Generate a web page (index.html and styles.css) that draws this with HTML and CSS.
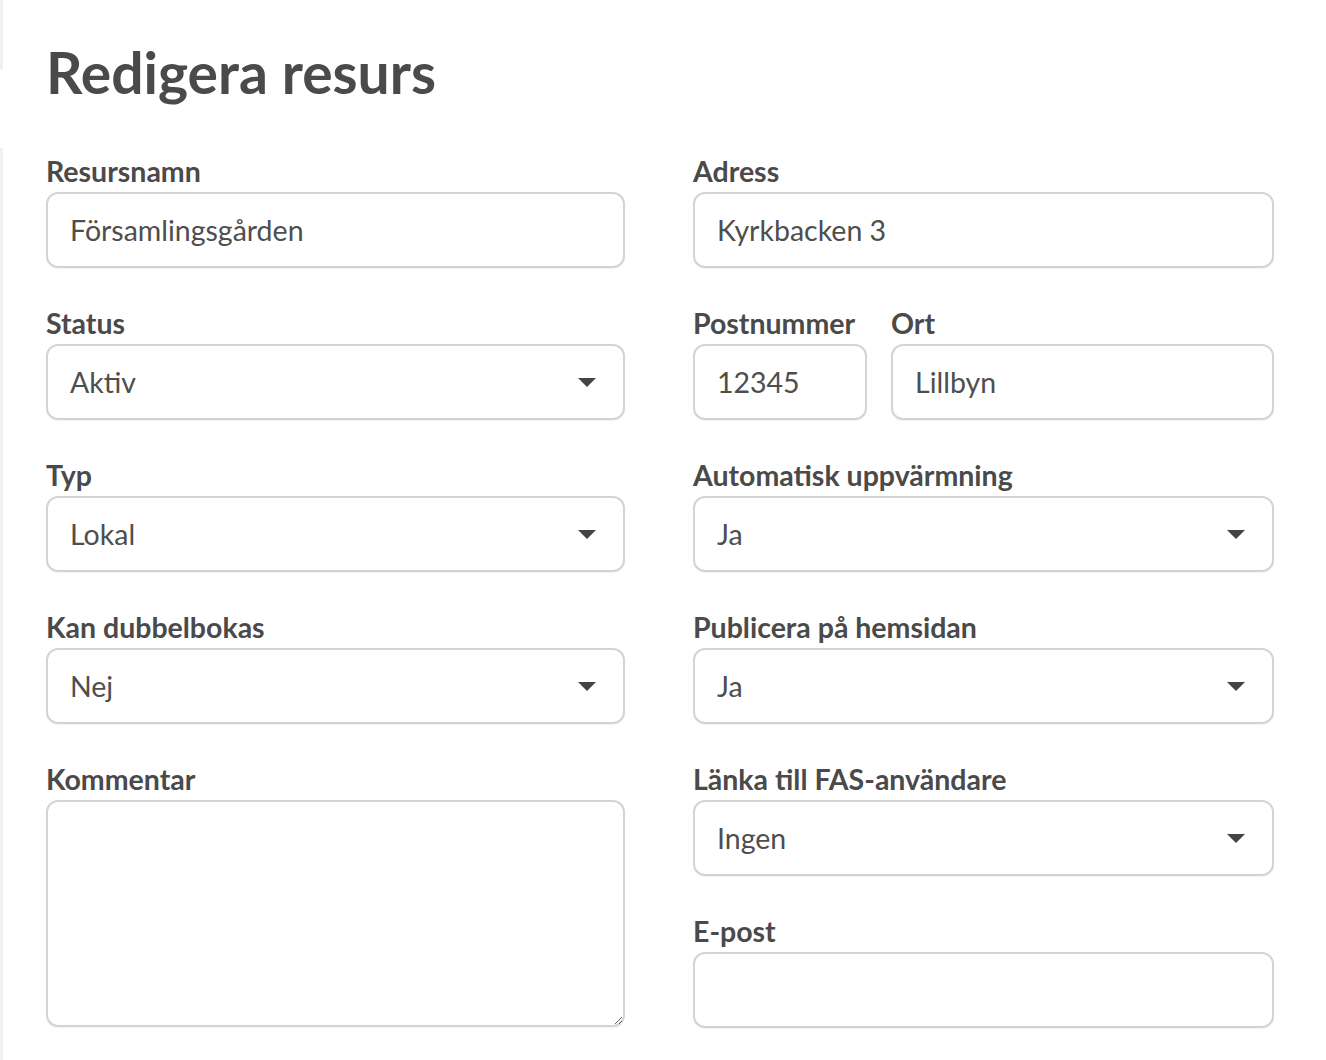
FILE: index.html
```html
<!DOCTYPE html>
<html lang="sv">
<head>
  <meta charset="UTF-8" />
  <meta name="viewport" content="width=device-width, initial-scale=1.0"/>
  <title>Redigera resurs</title>
  <link rel="stylesheet" href="styles.css">
</head>
<body>

  <div class="side-edge top"></div>
  <div class="side-edge bottom"></div>

  <main class="page">
    <h1>Redigera resurs</h1>

    <form class="resource-form">
      <div class="column">
        <div class="field">
          <label for="name">Resursnamn</label>
          <input type="text" id="name" value="Församlingsgården" />
        </div>

        <div class="field">
          <label for="status">Status</label>
          <div class="select-box">
            <select id="status">
              <option>Aktiv</option>
              <option>Inaktiv</option>
            </select>
          </div>
        </div>

        <div class="field">
          <label for="type">Typ</label>
          <div class="select-box">
            <select id="type">
              <option>Lokal</option>
            </select>
          </div>
        </div>

        <div class="field">
          <label for="double">Kan dubbelbokas</label>
          <div class="select-box">
            <select id="double">
              <option>Nej</option>
              <option>Ja</option>
            </select>
          </div>
        </div>

        <div class="field">
          <label for="comment">Kommentar</label>
          <textarea id="comment"></textarea>
        </div>
      </div>

      <div class="column">
        <div class="field">
          <label for="address">Adress</label>
          <input type="text" id="address" value="Kyrkbacken 3" />
        </div>

        <div class="field split">
          <div class="zip">
            <label for="zip">Postnummer</label>
            <input type="text" id="zip" value="12345" />
          </div>
          <div class="city">
            <label for="city">Ort</label>
            <input type="text" id="city" value="Lillbyn" />
          </div>
        </div>

        <div class="field">
          <label for="heating">Automatisk uppvärmning</label>
          <div class="select-box">
            <select id="heating">
              <option>Ja</option>
              <option>Nej</option>
            </select>
          </div>
        </div>

        <div class="field">
          <label for="publish">Publicera på hemsidan</label>
          <div class="select-box">
            <select id="publish">
              <option>Ja</option>
              <option>Nej</option>
            </select>
          </div>
        </div>

        <div class="field">
          <label for="user">Länka till FAS-användare</label>
          <div class="select-box">
            <select id="user">
              <option>Ingen</option>
            </select>
          </div>
        </div>

        <div class="field">
          <label for="email">E-post</label>
          <input type="email" id="email" />
        </div>
      </div>
    </form>
  </main>

</body>
</html>
```

FILE: styles.css
```css
body {
  font-family: 'Lato', 'Open Sans', sans-serif;
  margin: 0;
  padding: 0;
  background-color: #ffffff;
  color: #4a4a4a;
}

.side-edge {
  position: absolute;
  left: 0;
  width: 3px;
  background-color: #f1f1f1;
}

.side-edge.top {
  top: 0;
  height: 70px;
}

.side-edge.bottom {
  top: 148px;
  height: 912px;
}

.page {
  padding: 0 0 0 46px;
}

h1 {
  font-size: 57px;
  font-weight: 700;
  color: #4a4a4a;
  margin: 0;
  padding-top: 34px;
  line-height: 76px;
  height: 120px;
}

.resource-form {
  display: grid;
  grid-template-columns: 579px 581px;
  column-gap: 68px;
}

.column {
  display: flex;
  flex-direction: column;
}

.field {
  margin-bottom: 38px;
}

.field label {
  display: block;
  font-size: 28.5px;
  font-weight: 700;
  line-height: 34px;
  margin-bottom: 4px;
  color: #4a4a4a;
}

.field input,
.field select,
.field textarea {
  display: block;
  width: 100%;
  height: 76px;
  padding: 0 22px;
  border: 2px solid #d4d4d4;
  border-radius: 12px;
  box-sizing: border-box;
  font-family: 'Lato', 'Open Sans', sans-serif;
  font-size: 28.5px;
  color: #4e4e4e;
  background-color: #ffffff;
  box-shadow: 0 1px 1px rgba(0, 0, 0, 0.05);
  outline: none;
}

.field textarea {
  height: 227px;
  padding: 14px 22px;
  resize: vertical;
}

.select-box {
  position: relative;
}

.select-box select {
  appearance: none;
  -webkit-appearance: none;
  cursor: pointer;
}

.select-box::after {
  content: '';
  position: absolute;
  right: 29px;
  top: 34px;
  border-left: 9px solid transparent;
  border-right: 9px solid transparent;
  border-top: 9px solid #444444;
  pointer-events: none;
}

.split {
  display: flex;
  gap: 24px;
}

.split .zip {
  width: 174px;
}

.split .city {
  flex: 1;
}
```
